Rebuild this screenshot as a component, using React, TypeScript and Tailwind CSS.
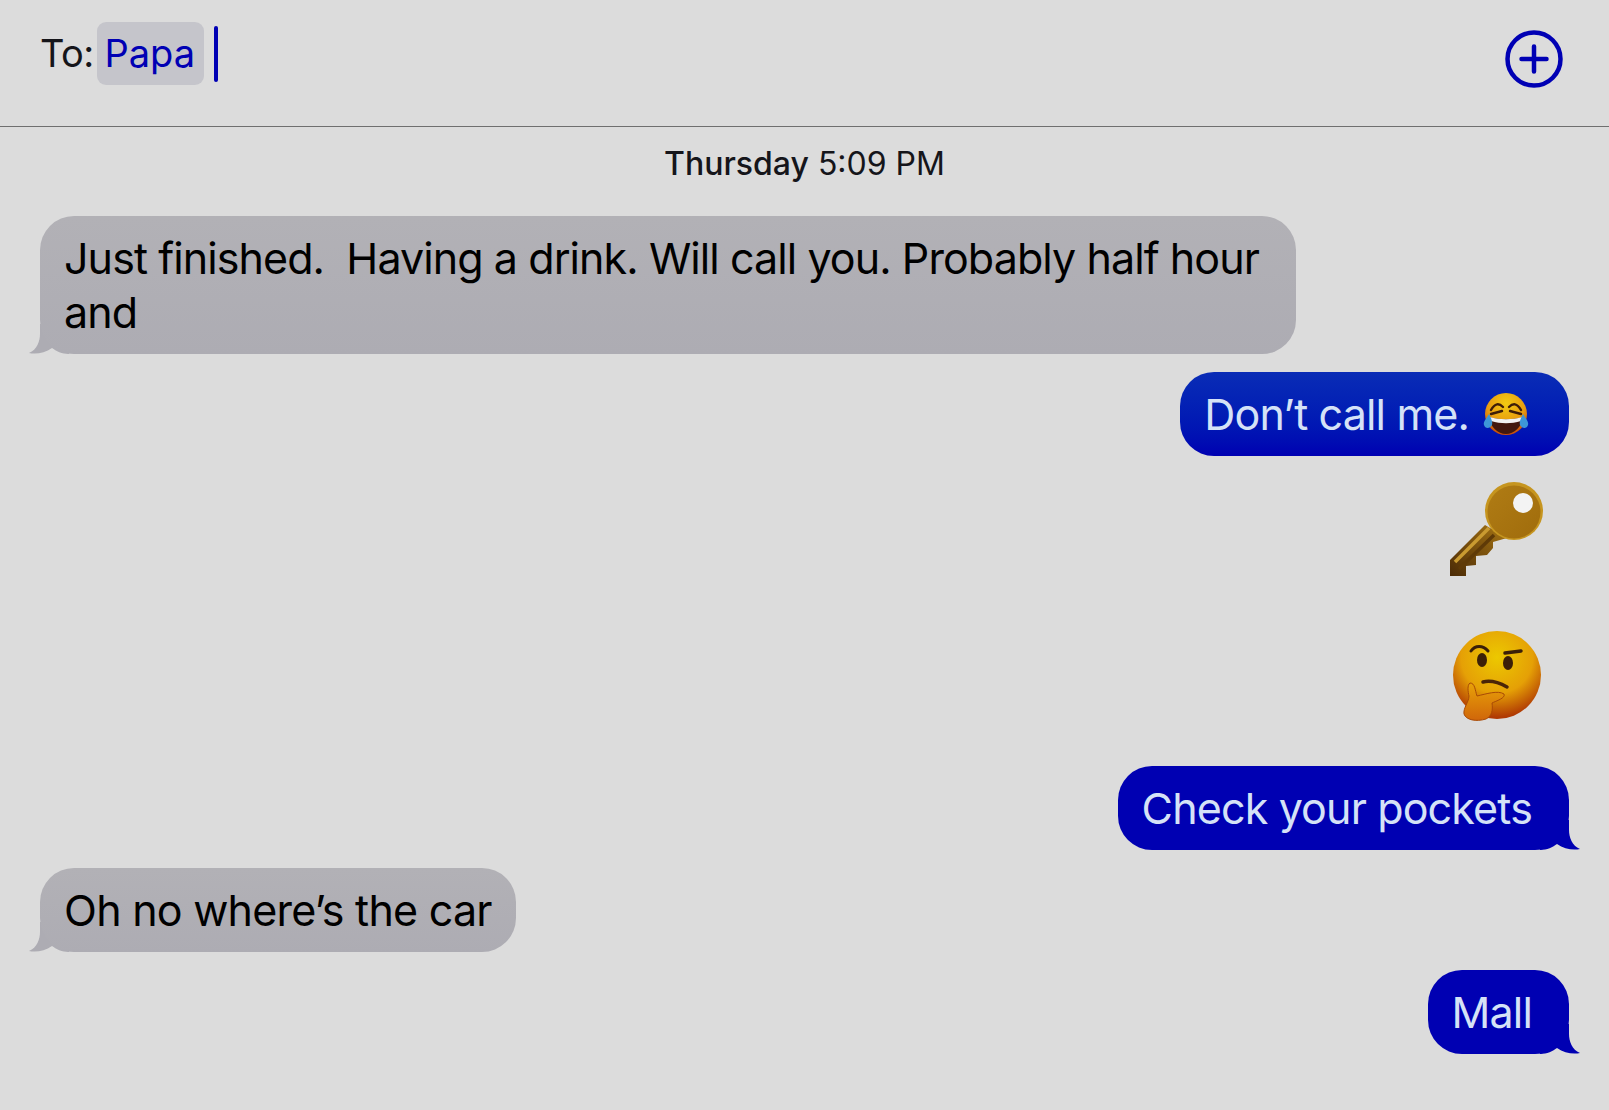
const font = { fontFamily: "Inter, 'Noto Sans', sans-serif" };

function TailLeft({ color }: { color: string }) {
  return (
    <svg className="absolute left-[-11px] bottom-0" width="40" height="30" viewBox="0 0 40 30">
      <path d="M11 0 L11 10 C11 17 8 26 0 29 C7 30.5 16 29 23 24 C27 27 33 30 40 30 L40 0 Z" fill={color} />
    </svg>
  );
}

function TailRight({ color }: { color: string }) {
  return (
    <svg className="absolute right-[-11px] bottom-0" width="40" height="30" viewBox="0 0 40 30">
      <path d="M29 0 L29 10 C29 17 32 26 40 29 C33 30.5 24 29 17 24 C13 27 7 30 0 30 L0 0 Z" fill={color} />
    </svg>
  );
}

function LaughEmoji() {
  return (
    <svg className="inline-block align-[-6px] ml-[14px] mr-[3px]" width="46" height="44" viewBox="0 0 46 44">
      <defs>
        <radialGradient id="laughFace" cx="50%" cy="25%" r="75%">
          <stop offset="0%" stopColor="#f2cb12" />
          <stop offset="60%" stopColor="#e99c10" />
          <stop offset="100%" stopColor="#c4480c" />
        </radialGradient>
      </defs>
      <circle cx="23" cy="22" r="21" fill="url(#laughFace)" />
      <path d="M8 18 C12 11 16 11 20 15 M38 18 C34 11 30 11 26 15" stroke="#3e1d08" strokeWidth="2.4" fill="none" strokeLinecap="round" />
      <path d="M8 22 L19 19 M38 22 L27 19" stroke="#3e1d08" strokeWidth="2.4" fill="none" strokeLinecap="round" />
      <path d="M6 25 C16 28 30 28 40 25 C39 35 31 42 23 42 C15 42 7 35 6 25 Z" fill="#43180e" />
      <path d="M7 25 C16 28 30 28 39 25 L38 29 C28 32 18 32 8 29 Z" fill="#f2f2f2" />
      <path d="M6 22 C3 27 0 30 1 33 C2 37 7 37 9 33 C10 30 8 26 6 22 Z" fill="#3d96d8" />
      <path d="M40 22 C43 27 46 30 45 33 C44 37 39 37 37 33 C36 30 38 26 40 22 Z" fill="#3d96d8" />
    </svg>
  );
}

function KeyEmoji() {
  return (
    <svg width="96" height="96" viewBox="0 0 96 96">
      <defs>
        <linearGradient id="keyHead" x1="0" y1="0" x2="1" y2="1">
          <stop offset="0%" stopColor="#b07c14" />
          <stop offset="100%" stopColor="#a06c0c" />
        </linearGradient>
        <linearGradient id="keyShaft" x1="0" y1="1" x2="1" y2="0">
          <stop offset="0%" stopColor="#4a2a06" />
          <stop offset="100%" stopColor="#a87614" />
        </linearGradient>
      </defs>
      <path d="M36 43 L1 78 L1 94 L17 94 L17 84 L27 83 L27 74 L38 73 L44 66 L44 60 L58 56 Z" fill="url(#keyShaft)" />
      <path d="M6 80 L40 46" stroke="#c99a30" strokeWidth="3.5" />
      <path d="M10 87 L45 53" stroke="#5f3a07" strokeWidth="3.5" />
      <circle cx="65" cy="29" r="29" fill="#c6951f" />
      <circle cx="65" cy="30" r="26.5" fill="url(#keyHead)" />
      <circle cx="74" cy="21" r="10" fill="#f3f3f3" />
    </svg>
  );
}

function ThinkingEmoji() {
  return (
    <svg width="90" height="92" viewBox="0 0 90 92">
      <defs>
        <radialGradient id="thinkFace" cx="50%" cy="30%" r="68%">
          <stop offset="0%" stopColor="#ecc800" />
          <stop offset="60%" stopColor="#e5a006" />
          <stop offset="100%" stopColor="#b03a04" />
        </radialGradient>
        <linearGradient id="thinkHand" x1="0" y1="0" x2="0" y2="1">
          <stop offset="0%" stopColor="#e8a208" />
          <stop offset="100%" stopColor="#d0660a" />
        </linearGradient>
      </defs>
      <circle cx="45" cy="45" r="44" fill="url(#thinkFace)" />
      <path d="M19 21 C23 15 31 15 36 21" stroke="#3b1f08" strokeWidth="3" fill="none" strokeLinecap="round" />
      <path d="M53 23 L69 21" stroke="#3b1f08" strokeWidth="3.5" fill="none" strokeLinecap="round" />
      <ellipse cx="30" cy="30" rx="5" ry="7" fill="#3b1f08" />
      <ellipse cx="56" cy="33" rx="5" ry="7" fill="#3b1f08" />
      <path d="M31 52 C39 50 46 52 55 57" stroke="#4a2408" strokeWidth="3.5" fill="none" strokeLinecap="round" />
      <path d="M18 53 C23 53 23 60 25 66 C34 64 46 60 52 64 C54 68 44 71 40 73 C41 80 40 86 34 89 C24 92 14 90 12 84 C11 78 17 72 17 66 C16 62 15 55 18 53 Z" fill="url(#thinkHand)" stroke="#a84a06" strokeWidth="1" />
    </svg>
  );
}

function Received({ text, wide }: { text: string; wide?: boolean }) {
  return (
    <div className="self-start relative ml-[40px]">
      <TailLeft color="#adacb3" />
      <div className={`relative rounded-[34px] bg-gradient-to-b from-[#b2b1b6] to-[#adacb3] px-[24px] py-[15px] text-[43px] leading-[54px] text-black whitespace-pre-wrap ${wide ? "w-[1256px] tracking-[-0.92px]" : "tracking-[-0.75px]"}`}>
        {text}
      </div>
    </div>
  );
}

function Sent({ children, tail }: { children: React.ReactNode; tail?: boolean }) {
  return (
    <div className="self-end relative mr-[40px]">
      {tail && <TailRight color="#0000b2" />}
      <div className={`relative rounded-[34px] pl-[24px] pr-[37px] py-[15px] text-[43px] tracking-[-0.85px] leading-[54px] text-[#d5e2f7] whitespace-nowrap ${tail ? "bg-[#0000b2]" : "bg-gradient-to-b from-[#0a2cb6] to-[#0000b2]"}`}>
        {children}
      </div>
    </div>
  );
}

export default function App() {
  return (
    <div className="w-[1609px] h-[1110px] overflow-hidden bg-[#dcdcdc]" style={font}>
      <div className="h-[127px] flex items-start justify-between border-b border-[#6f6f6f]">
        <div className="flex items-center mt-[22px] ml-[40px]">
          <span className="text-[38px] tracking-[-0.6px] text-[#15151a]">To:</span>
          <span className="ml-[3px] h-[63px] pl-[8px] pr-[9px] flex items-center rounded-[9px] bg-[#c5c5cb] text-[38px] text-[#0000b4]">Papa</span>
          <span className="ml-[10px] h-[56px] w-[4px] rounded-full bg-[#0000b4]" />
        </div>
        <svg className="mt-[30px] mr-[46px]" width="58" height="58" viewBox="0 0 58 58" fill="none" stroke="#0000b4" strokeWidth="4.5" strokeLinecap="round">
          <circle cx="29" cy="29" r="26.5" />
          <path d="M29 16.5 V41.5 M16.5 29 H41.5" />
        </svg>
      </div>

      <div className="h-[72px] pt-[16px] text-center text-[32px] leading-[42px] text-[#15151a]">
        <span className="font-medium">Thursday</span> 5:09 PM
      </div>

      <div className="h-[17px]" />

      <div className="flex flex-col gap-[18px]">
        <Received wide text={"Just finished.  Having a drink. Will call you. Probably half hour and"} />
        <Sent>
          Don’t call me.<LaughEmoji />
        </Sent>
        <div className="self-end h-[128px] pt-[8px] mr-[64px]">
          <KeyEmoji />
        </div>
        <div className="self-end h-[128px] pt-[10px] mr-[67px]">
          <ThinkingEmoji />
        </div>
        <Sent tail>Check your pockets</Sent>
        <Received text="Oh no where’s the car" />
        <Sent tail>Mall</Sent>
      </div>
    </div>
  );
}
